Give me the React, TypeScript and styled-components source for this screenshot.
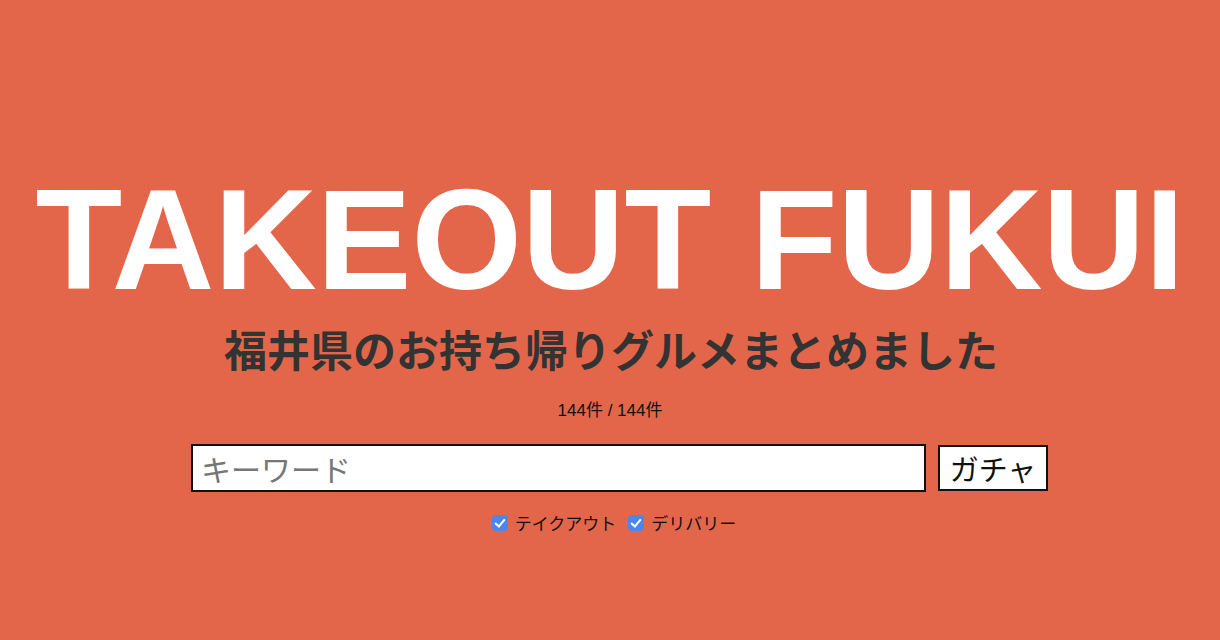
import React from "react";
import styled, { createGlobalStyle } from "styled-components";

const GlobalStyle = createGlobalStyle`
  html, body {
    margin: 0;
    padding: 0;
    background: #e3664a;
  }
  body {
    font-family: "Liberation Sans", "Noto Sans CJK JP", sans-serif;
    color: #111;
  }
`;

const Page = styled.main`
  min-height: 640px;
  display: flex;
  flex-direction: column;
  align-items: center;
  padding-top: 169px;
  box-sizing: border-box;
`;

const Title = styled.h1`
  margin: 0;
  font-family: "Liberation Sans", Arial, sans-serif;
  font-weight: 700;
  font-size: 142px;
  line-height: 142px;
  color: #ffffff;
  white-space: nowrap;
`;

const Subtitle = styled.h2`
  margin: 12px 0 0;
  font-family: "Noto Sans CJK JP", sans-serif;
  font-weight: 700;
  font-size: 43px;
  line-height: 50px;
  color: #333333;
  padding-left: 2px;
`;

const Count = styled.p`
  margin: 26px 0 0;
  font-family: "Liberation Sans", "Noto Sans CJK JP", sans-serif;
  font-size: 17px;
  line-height: 24px;
  color: #111;
`;

const SearchRow = styled.form`
  margin-top: 21px;
  display: flex;
  align-items: center;
  gap: 12px;
  padding-left: 19px;
`;

const KeywordInput = styled.input`
  box-sizing: border-box;
  width: 735px;
  height: 48px;
  border: 2px solid #111;
  background: #fff;
  padding: 0 8px;
  font-family: "Noto Sans CJK JP", sans-serif;
  font-size: 30px;
  outline: none;
  &::placeholder {
    color: #767676;
  }
`;

const GachaButton = styled.button`
  box-sizing: border-box;
  width: 110px;
  height: 46px;
  border: 2px solid #111;
  background: #fff;
  padding: 0;
  font-family: "Noto Sans CJK JP", sans-serif;
  font-size: 29px;
  color: #111;
  line-height: 1;
`;

const FilterRow = styled.div`
  margin-top: 19px;
  display: flex;
  align-items: center;
  gap: 12px;
  padding-left: 8px;
`;

const FilterLabel = styled.label`
  display: flex;
  align-items: center;
  gap: 7px;
  font-family: "Noto Sans CJK JP", sans-serif;
  font-size: 17px;
  line-height: 24px;
  color: #111;
`;

const Check = styled.input`
  appearance: none;
  -webkit-appearance: none;
  flex-shrink: 0;
  box-sizing: border-box;
  margin: 0;
  width: 16px;
  height: 16px;
  border-radius: 4px;
  background: #4a86ec;
  position: relative;
  &::after {
    content: "";
    position: absolute;
    left: 5px;
    top: 2px;
    width: 4px;
    height: 8px;
    border: solid #fff;
    border-width: 0 2px 2px 0;
    transform: rotate(40deg);
  }
`;

export default function App() {
  return (
    <>
      <GlobalStyle />
      <Page>
        <Title>TAKEOUT FUKUI</Title>
        <Subtitle>福井県のお持ち帰りグルメまとめました</Subtitle>
        <Count>144件 / 144件</Count>
        <SearchRow onSubmit={(e) => e.preventDefault()}>
          <KeywordInput type="text" placeholder="キーワード" />
          <GachaButton type="button">ガチャ</GachaButton>
        </SearchRow>
        <FilterRow>
          <FilterLabel>
            <Check type="checkbox" defaultChecked />
            テイクアウト
          </FilterLabel>
          <FilterLabel>
            <Check type="checkbox" defaultChecked />
            デリバリー
          </FilterLabel>
        </FilterRow>
      </Page>
    </>
  );
}
